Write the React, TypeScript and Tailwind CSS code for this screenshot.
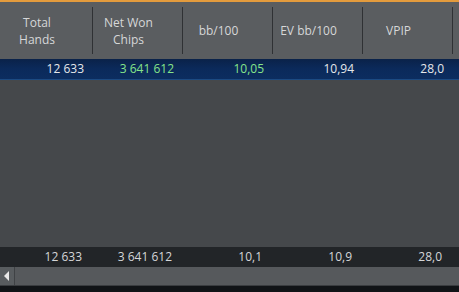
import React from "react";

const cols = [
  { h: ["Total", "Hands"], v: "12 633", vg: false, f: "12 633" },
  { h: ["Net Won", "Chips"], v: "3 641 612", vg: true, f: "3 641 612" },
  { h: ["bb/100"], v: "10,05", vg: true, f: "10,1" },
  { h: ["EV bb/100"], v: "10,94", vg: false, f: "10,9" },
  { h: ["VPIP"], v: "28,0", vg: false, f: "28,0" },
];

const widths = ["w-[92px]", "w-[89px]", "w-[89px]", "w-[89px]", "w-[89px]"];
const rowWidths = ["w-[93px]", "w-[90px]", "w-[90px]", "w-[90px]", "w-[90px]"];

export default function App() {
  return (
    <div
      className="w-[459px] h-[292px] overflow-hidden flex flex-col bg-[#45484b] text-[12px]"
      style={{ fontFamily: '"Open Sans", "Noto Sans", sans-serif' }}
    >
      <div className="h-[2px] bg-[#e39b3d] shrink-0" />
      {/* header */}
      <div className="h-[57px] shrink-0 flex bg-[#5a5d60] text-[#d6d7d8]">
        {cols.map((c, i) => (
          <React.Fragment key={i}>
            <div className={`${widths[i]} shrink-0 flex flex-col items-center justify-center pr-[18px] leading-[17px]`}>
              {c.h.map((l, j) => (
                <div key={j}>{l}</div>
              ))}
            </div>
            <div className="w-px shrink-0 bg-[#2f3134] my-[5px]" />
          </React.Fragment>
        ))}
        <div className="flex-1" />
      </div>
      {/* selected row */}
      <div className="h-[21px] shrink-0 flex bg-gradient-to-b from-[#0a2249] via-[#0b2a5b] to-[#0c2d60] border-b border-[#1c4a82]">
        {cols.map((c, i) => (
          <div
            key={i}
            className={`${rowWidths[i]} shrink-0 text-right pr-[9px] leading-[20px] ${c.vg ? "text-[#86e58a]" : "text-[#e6e8ea]"}`}
          >
            {c.v}
          </div>
        ))}
      </div>
      <div className="flex-1" />
      {/* footer */}
      <div className="h-[20px] shrink-0 flex bg-[#222528] text-[#d4d6d8]">
        {cols.map((c, i) => (
          <div key={i} className={`${rowWidths[i]} shrink-0 text-right pr-[11px] leading-[20px]`}>
            {c.f}
          </div>
        ))}
      </div>
      {/* scrollbar */}
      <div className="h-[18px] shrink-0 flex bg-[#55595c]">
        <div className="w-[14px] shrink-0 flex items-center justify-center bg-[#585c5f]">
          <svg width="6" height="10" viewBox="0 0 6 10">
            <polygon points="5,0 5,10 0,5" fill="#e8e8e8" />
          </svg>
        </div>
        <div className="w-px shrink-0 bg-[#3f4245]" />
        <div className="flex-1 bg-[#56595c]" />
      </div>
      <div className="h-px shrink-0 bg-[#3a3d40]" />
      <div className="h-[6px] shrink-0 bg-[#111417]" />
    </div>
  );
}
